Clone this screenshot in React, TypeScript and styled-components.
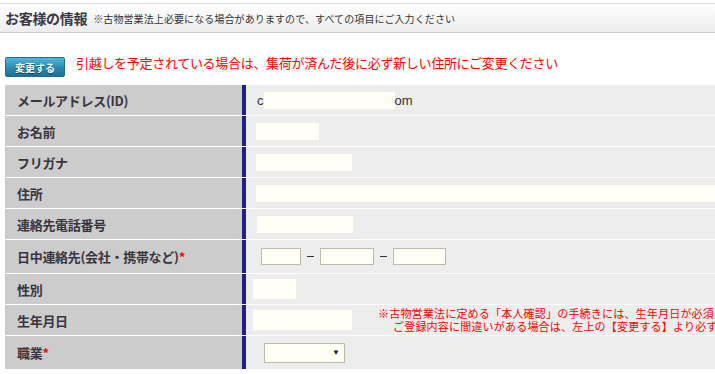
import React from "react";
import styled, { createGlobalStyle } from "styled-components";

const Global = createGlobalStyle`
  html, body { margin: 0; padding: 0; background: #fff; overflow: hidden; }
  body { font-family: "Noto Sans CJK JP", "Liberation Sans", sans-serif; color: #333; }
`;

const Page = styled.div`
  width: 715px;
  padding-top: 3px;
`;

const Header = styled.div`
  display: flex;
  align-items: center;
  gap: 6px;
  height: 28px;
  padding-left: 5px;
  border-top: 1px solid #dcdcdc;
  border-bottom: 1px solid #cbcbcb;
  background: linear-gradient(#ffffff, #ececec);
`;

const Title = styled.h2`
  margin: 0;
  font-size: 14px;
  font-weight: bold;
  color: #3a3848;
  letter-spacing: -0.3px;
`;

const HeaderNote = styled.span`
  font-size: 10px;
  color: #333;
  letter-spacing: 0.1px;
`;

const NoticeBar = styled.div`
  display: flex;
  align-items: flex-start;
  gap: 11px;
  margin-top: 23px;
  padding-left: 5px;
  height: 21px;
`;

const ChangeButton = styled.button`
  width: 60px;
  height: 20px;
  margin-top: 1px;
  padding: 0;
  border: 1px solid #1f6e90;
  border-radius: 2px;
  background: linear-gradient(#52b6da, #2a8ab4 55%, #1c6f96);
  color: #fff;
  font-family: inherit;
  font-size: 10px;
  font-weight: bold;
  text-shadow: 0 1px 1px rgba(0, 0, 0, 0.5);
  cursor: pointer;
`;

const Notice = styled.span`
  margin-top: -1px;
  font-size: 13px;
  line-height: 15px;
  color: #ff0000;
  letter-spacing: -0.3px;
  white-space: nowrap;
`;

const Table = styled.div`
  margin-top: 8px;
  margin-left: 5px;
  width: 710px;
`;

const Row = styled.div<{ $h: number; $last?: boolean }>`
  display: grid;
  grid-template-columns: 241px 1fr;
  height: ${(p) => p.$h}px;
  border-bottom: ${(p) => (p.$last ? "none" : "1px solid #fff")};
`;

const Label = styled.div`
  display: flex;
  align-items: center;
  padding-left: 12px;
  background: #cccccc;
  border-right: 4px solid #1e1e8c;
  font-size: 13px;
  font-weight: bold;
  color: #3a3440;
  white-space: nowrap;
  letter-spacing: -0.3px;
`;

const Required = styled.span`
  color: #ff0000;
  font-weight: bold;
`;

const Value = styled.div<{ $indent: number }>`
  display: flex;
  align-items: center;
  padding-left: ${(p) => p.$indent}px;
  background: #ededed;
  overflow: hidden;
  white-space: nowrap;
  font-family: "Liberation Sans", "Noto Sans CJK JP", sans-serif;
  font-size: 13px;
  color: #333;
`;

const Mask = styled.span<{ $w: number; $h: number }>`
  display: inline-block;
  flex: none;
  width: ${(p) => p.$w}px;
  height: ${(p) => p.$h}px;
  background: #fffff5;
`;

const Input = styled.input<{ $w: number }>`
  box-sizing: border-box;
  width: ${(p) => p.$w}px;
  height: 17px;
  padding: 0;
  border: 1px solid #bdbca6;
  background: #fffff6;
`;

const Dash = styled.span`
  width: 7px;
  height: 1px;
  margin: 0 6px;
  background: #333;
`;

const Select = styled.div`
  box-sizing: border-box;
  display: flex;
  align-items: center;
  justify-content: flex-end;
  width: 81px;
  height: 20px;
  padding-right: 4px;
  border: 1px solid #bdbca6;
  background: #fffff6;
  font-size: 8px;
  color: #222;
`;

const Caution = styled.div`
  margin-left: 26px;
  font-family: "Noto Sans CJK JP", sans-serif;
  font-size: 11px;
  line-height: 13px;
  color: #ff0000;
  letter-spacing: 0.2px;
`;

const CautionLine = styled.div<{ $indent?: number }>`
  padding-left: ${(p) => p.$indent ?? 0}px;
`;

export default function App() {
  return (
    <>
      <Global />
      <Page>
        <Header>
          <Title>お客様の情報</Title>
          <HeaderNote>※古物営業法上必要になる場合がありますので、すべての項目にご入力ください</HeaderNote>
        </Header>
        <NoticeBar>
          <ChangeButton>変更する</ChangeButton>
          <Notice>引越しを予定されている場合は、集荷が済んだ後に必ず新しい住所にご変更ください</Notice>
        </NoticeBar>
        <Table>
          <Row $h={30}>
            <Label>メールアドレス(ID)</Label>
            <Value $indent={11}>
              c<Mask $w={131} $h={17} />om
            </Value>
          </Row>
          <Row $h={30}>
            <Label>お名前</Label>
            <Value $indent={10}>
              <Mask $w={63} $h={17} />
            </Value>
          </Row>
          <Row $h={30}>
            <Label>フリガナ</Label>
            <Value $indent={10}>
              <Mask $w={96} $h={17} />
            </Value>
          </Row>
          <Row $h={30}>
            <Label>住所</Label>
            <Value $indent={10}>
              <Mask $w={470} $h={17} />
            </Value>
          </Row>
          <Row $h={30}>
            <Label>連絡先電話番号</Label>
            <Value $indent={11}>
              <Mask $w={96} $h={17} />
            </Value>
          </Row>
          <Row $h={33}>
            <Label>
              日中連絡先(会社・携帯など)<Required>*</Required>
            </Label>
            <Value $indent={15}>
              <Input $w={40} />
              <Dash />
              <Input $w={54} />
              <Dash />
              <Input $w={53} />
            </Value>
          </Row>
          <Row $h={30}>
            <Label>性別</Label>
            <Value $indent={7}>
              <Mask $w={43} $h={20} />
            </Value>
          </Row>
          <Row $h={30}>
            <Label>生年月日</Label>
            <Value $indent={7}>
              <Mask $w={99} $h={20} />
              <Caution>
                <CautionLine>※古物営業法に定める「本人確認」の手続きには、生年月日が必須となります。</CautionLine>
                <CautionLine $indent={15}>ご登録内容に間違いがある場合は、左上の【変更する】より必ずご変更ください。</CautionLine>
              </Caution>
            </Value>
          </Row>
          <Row $h={33} $last>
            <Label>
              職業<Required>*</Required>
            </Label>
            <Value $indent={18}>
              <Select>▼</Select>
            </Value>
          </Row>
        </Table>
      </Page>
    </>
  );
}
